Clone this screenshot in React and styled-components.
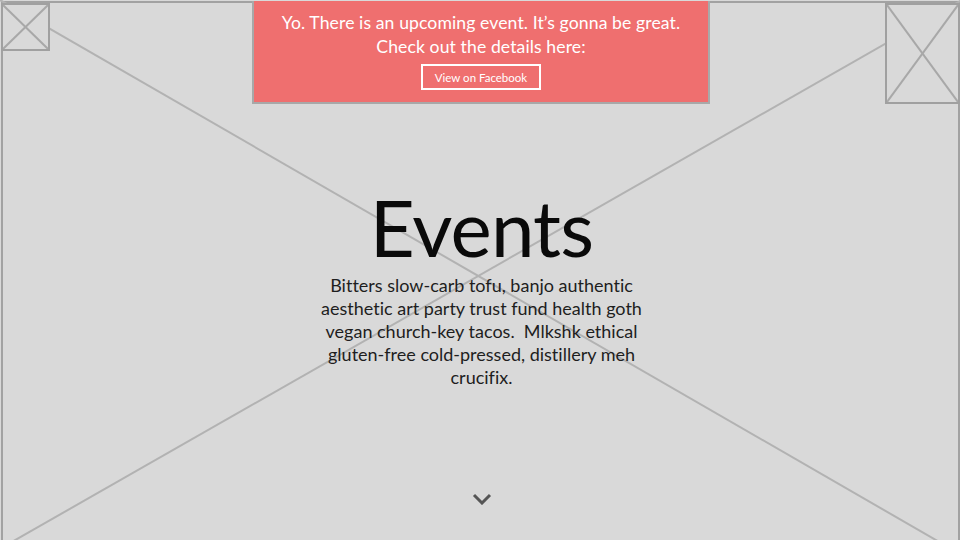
import React from 'react';
import styled, { createGlobalStyle } from 'styled-components';

const GlobalStyle = createGlobalStyle`
  html, body {
    margin: 0;
    padding: 0;
    background: #d9d9d9;
  }
  body {
    font-family: Lato, "Open Sans", sans-serif;
    font-variant-ligatures: no-common-ligatures;
  }
`;

const Page = styled.div`
  width: 960px;
  height: 540px;
  overflow: hidden;
  background: #d9d9d9;
  padding: 1px 0 0 1px;
  box-sizing: border-box;
`;

const Frame = styled.div`
  position: relative;
  height: 560px;
  box-sizing: border-box;
  border: 2px solid #a2a2a2;
  border-bottom: none;
  display: flex;
  flex-direction: column;
  align-items: center;
`;

const Backdrop = styled.svg`
  position: absolute;
  left: -3px;
  top: -3px;
  width: 962px;
  height: 547px;
  z-index: 0;
`;

const TopRow = styled.div`
  position: relative;
  z-index: 1;
  align-self: stretch;
  display: grid;
  grid-template-columns: 1fr auto 1fr;
  align-items: start;
  margin-top: -2px;
`;

const Thumb = styled.div`
  position: relative;
  width: ${p => p.w}px;
  height: ${p => p.h}px;
  box-sizing: border-box;
  border: 2px solid #a0a0a0;
  background: #d9d9d9;
  justify-self: ${p => p.side};
  margin-left: ${p => (p.side === 'start' ? '-2px' : '0')};
  margin-right: ${p => (p.side === 'end' ? '-2px' : '0')};
  margin-top: ${p => p.top}px;
`;

const ThumbCross = styled.svg`
  display: block;
  width: 100%;
  height: 100%;
`;

const Banner = styled.div`
  width: 458px;
  height: 103px;
  box-sizing: border-box;
  background: #ef6f6f;
  border: 2px solid #a8a8a8;
  border-top: none;
  margin-left: 1px;
  display: flex;
  flex-direction: column;
  align-items: center;
  padding-top: 10px;
  color: #fff;
`;

const BannerText = styled.p`
  margin: 0;
  font-size: 17.6px;
  line-height: 24px;
  text-align: center;
  letter-spacing: 0.1px;
`;

const FacebookButton = styled.a`
  margin-top: 5px;
  width: 120px;
  height: 26px;
  box-sizing: border-box;
  border: 2px solid #fff;
  display: flex;
  align-items: center;
  justify-content: center;
  font-size: 11.5px;
  color: #fff;
  text-decoration: none;
`;

const Hero = styled.section`
  position: relative;
  z-index: 1;
  margin-top: 83px;
  display: flex;
  flex-direction: column;
  align-items: center;
  margin-left: 2px;
`;

const Title = styled.h1`
  margin: 0;
  font-size: 78px;
  font-weight: 400;
  line-height: 80px;
  color: #0a0a0a;
  letter-spacing: -0.8px;
`;

const Blurb = styled.p`
  margin: 7px 0 0;
  width: 345px;
  font-size: 18px;
  line-height: 23px;
  text-align: center;
  color: #1e1e1e;
`;

const Chevron = styled.svg`
  position: relative;
  z-index: 1;
  margin-top: 104px;
  margin-left: 2px;
  width: 20px;
  height: 12px;
`;

const Cross = ({ w, h }) => (
  <ThumbCross viewBox={`0 0 ${w} ${h}`} preserveAspectRatio="none">
    <line x1="0" y1="0" x2={w} y2={h} stroke="#a8a8a8" strokeWidth="2" />
    <line x1={w} y1="0" x2="0" y2={h} stroke="#a8a8a8" strokeWidth="2" />
  </ThumbCross>
);

export default function App() {
  return (
    <Page>
      <GlobalStyle />
      <Frame>
        <Backdrop viewBox="0 0 962 547" preserveAspectRatio="none">
          <line x1="0" y1="0" x2="948" y2="547" stroke="#b2b2b2" strokeWidth="2" />
          <line x1="962" y1="0" x2="3" y2="547" stroke="#b2b2b2" strokeWidth="2" />
        </Backdrop>
        <TopRow>
          <Thumb w={49} h={48} side="start" top={2}>
            <Cross w={45} h={44} />
          </Thumb>
          <Banner>
            <BannerText>Yo. There is an upcoming event. It’s gonna be great.</BannerText>
            <BannerText>Check out the details here:</BannerText>
            <FacebookButton href="#">View on Facebook</FacebookButton>
          </Banner>
          <Thumb w={75} h={101} side="end" top={2}>
            <Cross w={71} h={97} />
          </Thumb>
        </TopRow>
        <Hero>
          <Title>Events</Title>
          <Blurb>
            Bitters slow-carb tofu, banjo authentic aesthetic art party trust fund health goth
            vegan church-key tacos.&nbsp; Mlkshk ethical gluten-free cold-pressed, distillery meh
            crucifix.
          </Blurb>
        </Hero>
        <Chevron viewBox="0 0 20 12">
          <polyline points="2,2 10,10 18,2" fill="none" stroke="#555" strokeWidth="3" />
        </Chevron>
      </Frame>
    </Page>
  );
}
